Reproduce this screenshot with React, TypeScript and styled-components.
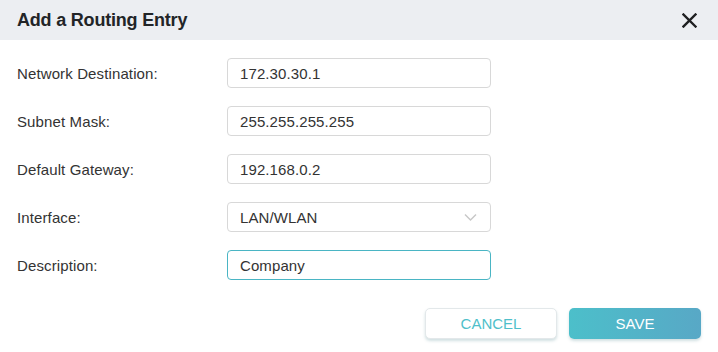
import React from "react";
import styled, { createGlobalStyle } from "styled-components";

const Global = createGlobalStyle`
  html, body { margin: 0; padding: 0; background: #ffffff; }
  body { font-family: "Liberation Sans", Arial, sans-serif; }
  * { box-sizing: border-box; }
`;

const Dialog = styled.div`
  width: 718px;
  height: 352px;
  background: #ffffff;
  display: flex;
  flex-direction: column;
`;

const Header = styled.div`
  height: 40px;
  background: #eceef2;
  display: flex;
  align-items: center;
  justify-content: space-between;
  padding: 0 19px 0 17px;
`;

const Title = styled.h1`
  margin: 0;
  font-size: 18px;
  font-weight: 700;
  color: #222427;
  letter-spacing: -0.2px;
`;

const CloseButton = styled.button`
  border: none;
  background: transparent;
  padding: 0;
  width: 20px;
  height: 20px;
  display: flex;
  align-items: center;
  justify-content: center;
  cursor: pointer;
`;

const Form = styled.div`
  display: flex;
  flex-direction: column;
  gap: 18px;
  padding: 18px 0 0 17px;
`;

const Row = styled.div`
  display: grid;
  grid-template-columns: 210px 264px;
  align-items: center;
  height: 30px;
`;

const Label = styled.label`
  font-size: 15px;
  color: #333333;
  letter-spacing: 0.12px;
`;

const Field = styled.div<{ $focused?: boolean }>`
  position: relative;
  height: 30px;
  border: 1px solid ${(p) => (p.$focused ? "#4ab5c4" : "#d8d8d8")};
  border-radius: 4px;
  display: flex;
  align-items: center;
  padding: 0 12px;
  font-size: 15px;
  color: #333333;
  letter-spacing: 0.1px;
`;

const Chevron = styled.span`
  position: absolute;
  right: 13px;
  top: 10px;
  display: flex;
`;

const Footer = styled.div`
  margin-top: 28px;
  display: flex;
  justify-content: flex-end;
  gap: 12px;
  padding-right: 17px;
`;

const Button = styled.button<{ $primary?: boolean }>`
  width: 132px;
  height: 31px;
  border-radius: 5px;
  font-family: "Liberation Sans", Arial, sans-serif;
  font-size: 15px;
  cursor: pointer;
  border: ${(p) => (p.$primary ? "none" : "1px solid #e3e8ea")};
  background: ${(p) =>
    p.$primary ? "linear-gradient(90deg, #4cbfca 0%, #58a8c6 100%)" : "#ffffff"};
  color: ${(p) => (p.$primary ? "#ffffff" : "#4fbfca")};
  box-shadow: 0 2px 3px rgba(70, 130, 140, 0.25);
`;

const fields = [
  { label: "Network Destination:", value: "172.30.30.1" },
  { label: "Subnet Mask:", value: "255.255.255.255" },
  { label: "Default Gateway:", value: "192.168.0.2" },
  { label: "Interface:", value: "LAN/WLAN", select: true },
  { label: "Description:", value: "Company", focused: true },
];

export default function App() {
  return (
    <>
      <Global />
      <Dialog>
        <Header>
          <Title>Add a Routing Entry</Title>
          <CloseButton aria-label="close">
            <svg width="15" height="15" viewBox="0 0 15 15">
              <path d="M1.5 1.5 L13.5 13.5 M13.5 1.5 L1.5 13.5" stroke="#1e1f21" strokeWidth="2.4" strokeLinecap="square" />
            </svg>
          </CloseButton>
        </Header>
        <Form>
          {fields.map((f) => (
            <Row key={f.label}>
              <Label>{f.label}</Label>
              <Field $focused={f.focused}>
                {f.value}
                {f.select && (
                  <Chevron>
                    <svg width="13" height="9" viewBox="0 0 13 9">
                      <path d="M1 1.5 L6.5 7 L12 1.5" fill="none" stroke="#c8c8c8" strokeWidth="1.5" />
                    </svg>
                  </Chevron>
                )}
              </Field>
            </Row>
          ))}
        </Form>
        <Footer>
          <Button>CANCEL</Button>
          <Button $primary>SAVE</Button>
        </Footer>
      </Dialog>
    </>
  );
}
